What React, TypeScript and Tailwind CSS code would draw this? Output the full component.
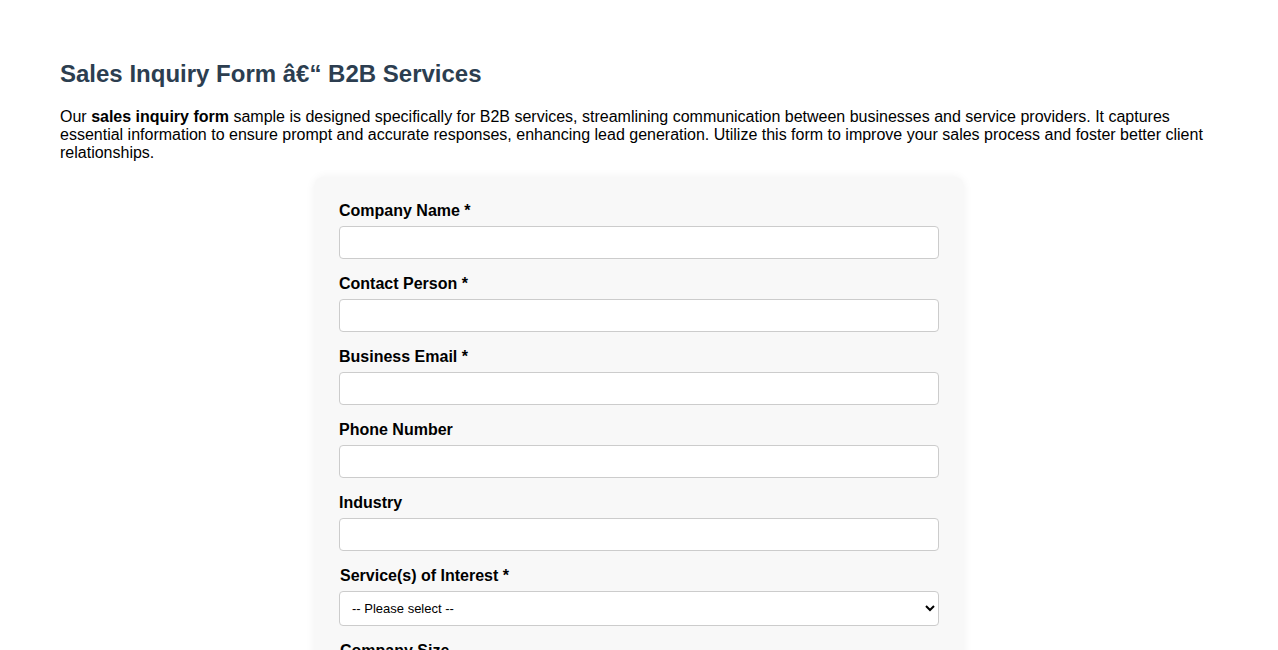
import { useState } from 'react';

const fields = [
  { label: 'Company Name *', type: 'text' },
  { label: 'Contact Person *', type: 'text' },
  { label: 'Business Email *', type: 'email' },
  { label: 'Phone Number', type: 'tel' },
  { label: 'Industry', type: 'text' },
];

export default function App() {
  const [service, setService] = useState('');
  const [size, setSize] = useState('');

  return (
    <div className="min-h-screen bg-white px-[60px] pt-[60px] pb-10 font-['Liberation_Sans',Arial,sans-serif] text-black">
      <h2 className="mb-[21px] text-[24px] font-bold leading-[27px] text-[#2c3e50]">
        Sales Inquiry Form {'\u00e2\u20ac\u201c'} B2B Services
      </h2>
      <p className="mb-[15px] text-[16px] leading-[18px]">
        Our <strong>sales inquiry form</strong> sample is designed specifically for B2B services, streamlining communication between
        businesses and service providers. It captures essential information to ensure prompt and accurate responses, enhancing lead
        generation. Utilize this form to improve your sales process and foster better client relationships.
      </p>

      <form className="mx-auto w-[650px] rounded-[10px] bg-[#f8f8f8] p-[25px] shadow-[0_0_10px_rgba(0,0,0,0.06)]">
        {fields.map((f) => (
          <div key={f.label}>
            <label className="mb-[6px] block text-[16px] font-bold leading-[18px]">{f.label}</label>
            <input
              type={f.type}
              className="mb-[16px] block h-[33px] w-full rounded-[4px] border border-[#cccccc] bg-white px-2 text-[14px]"
            />
          </div>
        ))}

        <label className="mb-[6px] block pl-px text-[16px] font-bold leading-[18px]">Service(s) of Interest *</label>
        <select
          value={service}
          onChange={(e) => setService(e.target.value)}
          className="mb-[16px] block h-[35px] w-full rounded-[4px] border border-[#cccccc] bg-white pl-[8px] pr-2 text-[13px]"
        >
          <option value="">-- Please select --</option>
          <option>Consulting</option>
          <option>Software Development</option>
          <option>Marketing</option>
          <option>Other</option>
        </select>

        <label className="mb-[6px] block pl-px text-[16px] font-bold leading-[18px]">Company Size</label>
        <select
          value={size}
          onChange={(e) => setSize(e.target.value)}
          className="mb-[16px] block h-[35px] w-full rounded-[4px] border border-[#cccccc] bg-white pl-[8px] pr-2 text-[13px]"
        >
          <option value="">-- Please select --</option>
          <option>1-10</option>
          <option>11-50</option>
          <option>51-200</option>
          <option>200+</option>
        </select>

        <label className="mb-[6px] block text-[16px] font-bold leading-[18px]">Message</label>
        <textarea className="mb-[16px] block h-[100px] w-full rounded-[4px] border border-[#cccccc] bg-white p-2 text-[14px]" />

        <button type="button" className="rounded-[4px] bg-[#2c3e50] px-5 py-[10px] text-[16px] font-bold text-white">
          Submit Inquiry
        </button>
      </form>
    </div>
  );
}
